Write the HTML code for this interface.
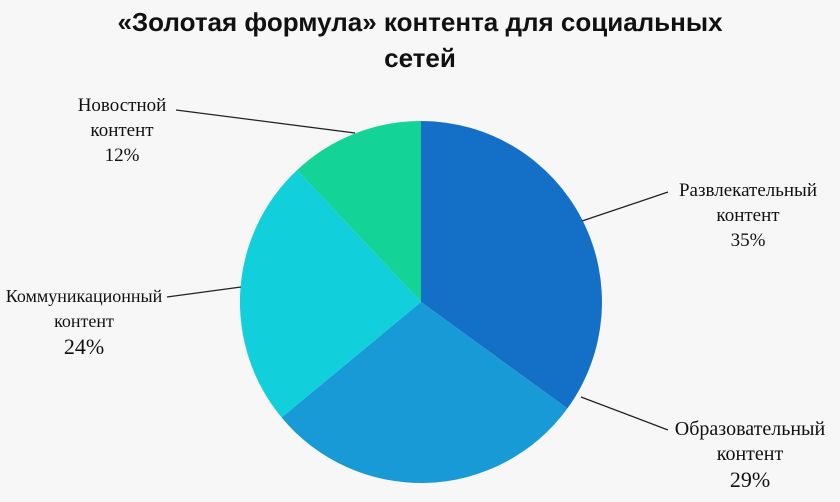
<!DOCTYPE html>
<html><head><meta charset="utf-8"><style>
body{margin:0;width:840px;height:502px;background:#f7f7f7;overflow:hidden;font-family:"Liberation Serif","DejaVu Serif",serif;color:#111}
.t{position:absolute;left:0;width:840px;text-align:center;font-family:"Liberation Sans",sans-serif;font-weight:bold;font-size:26px;line-height:36px;top:4px;color:#111}
.l{position:absolute;text-align:center;font-size:19px;line-height:25px}
</style></head><body>
<div class="t">«Золотая формула» контента для социальных<br>сетей</div>
<svg width="840" height="502" style="position:absolute;left:0;top:0">
<path d="M421,302 L421,121 A181,181 0 0 1 567.4,408.4 Z" fill="#1470c6"/>
<path d="M421,302 L567.4,408.4 A181,181 0 0 1 281.6,417.5 Z" fill="#179ad6"/>
<path d="M421,302 L281.6,417.5 A181,181 0 0 1 297,170.1 Z" fill="#12cfdc"/>
<path d="M421,302 L297,170.1 A181,181 0 0 1 421,121 Z" fill="#14d397"/>
<g stroke="#222" stroke-width="1.3" fill="none">
<path d="M176,110 L355,133"/>
<path d="M668,192 L582,221"/>
<path d="M167,297 L241,287"/>
<path d="M668,430 L581,397"/>
</g>
</svg>
<div class="l" style="left:52px;top:93px;width:140px">Новостной<br>контент<br>12%</div>
<div class="l" style="left:660px;top:178px;width:176px">Развлекательный<br>контент<br>35%</div>
<div class="l" style="left:0px;top:284px;width:168px;font-size:18px">Коммуникационный<br>контент<br><span style="font-size:22px">24%</span></div>
<div class="l" style="left:662px;top:417px;width:176px;font-size:20px">Образовательный<br>контент<br><span style="font-size:22px">29%</span></div>
</body></html>
